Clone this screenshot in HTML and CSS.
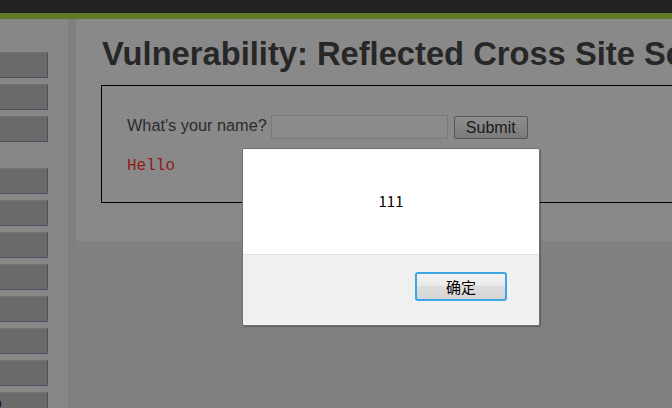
FILE: index.html
```html
<!DOCTYPE html>
<html>
<head>
<meta charset="utf-8">
<link rel="stylesheet" href="styles.css">
</head>
<body>
<div class="page">
  <div class="topbar"></div>
  <div class="greenbar"></div>
  <div class="main">
    <div class="sidebar">
      <div class="menu">
        <div class="item"></div>
        <div class="item"></div>
        <div class="item"></div>
      </div>
      <div class="menu">
        <div class="item"></div>
        <div class="item"></div>
        <div class="item"></div>
        <div class="item"></div>
        <div class="item"></div>
        <div class="item"></div>
        <div class="item"></div>
        <div class="item"><span class="clip">D</span></div>
      </div>
    </div>
    <div class="content">
      <div class="panel">
        <h1 class="title">Vulnerability: Reflected Cross Site Scripting (XSS)</h1>
        <div class="box">
          <div class="form-row">
            <span class="label">What's your name?</span>
            <span class="input"></span>
            <span class="submit">Submit</span>
          </div>
          <pre class="hello">Hello</pre>
        </div>
      </div>
    </div>
  </div>
</div>
<div class="dialog">
  <div class="dialog-body">111</div>
  <div class="dialog-foot">
    <span class="ok">确定</span>
  </div>
</div>
</body>
</html>
```
FILE: styles.css
```css
html, body {
  margin: 0;
  padding: 0;
}
body {
  width: 672px;
  height: 408px;
  overflow: hidden;
  position: relative;
  background: #808080;
  font-family: "Liberation Sans", Arial, sans-serif;
}
.page {
  display: flex;
  flex-direction: column;
  height: 408px;
  overflow: hidden;
}
.topbar {
  flex-shrink: 0;
  height: 13px;
  background: #222222;
}
.greenbar {
  flex-shrink: 0;
  height: 6px;
  background: #627a28;
}
.main {
  flex: 1;
  min-height: 0;
  display: flex;
  overflow: hidden;
}
.sidebar {
  flex-shrink: 0;
  width: 68px;
  background: #878787;
  border-right: 8px solid #7f7f7f;
  padding-top: 33px;
  box-sizing: content-box;
  display: flex;
  flex-direction: column;
  gap: 26px;
}
.menu {
  flex-shrink: 0;
  display: flex;
  flex-direction: column;
  gap: 6px;
}
.item {
  flex-shrink: 0;
  width: 48px;
  height: 26px;
  box-sizing: border-box;
  background: #6a6a6a;
  border-top: 1px solid #727272;
  border-right: 1px solid #4d5262;
  border-bottom: 1px solid #4d5262;
  overflow: hidden;
  position: relative;
}
.clip {
  display: block;
  margin-left: -9px;
  margin-top: 2px;
  font-size: 15px;
  line-height: 18px;
  color: #111;
}
.content {
  flex: 1;
  min-width: 0;
  background: #808080;
}
.panel {
  background: #898989;
  height: 222px;
  padding-left: 26px;
  overflow: hidden;
  box-sizing: border-box;
  padding-top: 16px;
}
.title {
  margin: 0;
  font-size: 32.7px;
  line-height: 38px;
  font-weight: bold;
  color: #272727;
  white-space: nowrap;
}
.box {
  margin-top: 12px;
  margin-left: -1px;
  border: 1px solid #000;
  border-right: none;
  height: 118px;
  box-sizing: border-box;
  padding-left: 25px;
  padding-top: 29px;
  width: 700px;
}
.form-row {
  display: flex;
  align-items: flex-start;
  height: 24px;
}
.label {
  font-size: 16.3px;
  line-height: 19px;
  margin-top: 1px;
  color: #2b2b2b;
}
.input {
  display: inline-block;
  margin-left: 4px;
  width: 177px;
  height: 24px;
  box-sizing: border-box;
  border: 1px solid #7a7a7a;
  background: #8b8b8b;
}
.submit {
  margin-left: 6px;
  margin-top: 1px;
  height: 23px;
  width: 74px;
  box-sizing: border-box;
  border: 1px solid #555;
  border-radius: 2px;
  background: linear-gradient(#8e8e8e, #7a7a7a);
  font-size: 16px;
  color: #1a1a1a;
  display: flex;
  align-items: center;
  justify-content: center;
}
.hello {
  margin: 18px 0 0 0;
  font-family: "Liberation Mono", "Courier New", monospace;
  font-size: 16px;
  line-height: 18px;
  color: #8f1a1a;
}
.dialog {
  position: absolute;
  left: 242px;
  top: 148px;
  width: 298px;
  height: 178px;
  box-sizing: border-box;
  border: 1px solid #707070;
  border-radius: 2px;
  box-shadow: 1px 1px 1px rgba(0,0,0,0.25);
  display: flex;
  flex-direction: column;
  overflow: hidden;
  font-family: "Noto Sans CJK SC", "DejaVu Sans", sans-serif;
}
.dialog-body {
  height: 106px;
  background: #ffffff;
  border-bottom: 1px solid #e4e4e4;
  display: flex;
  align-items: center;
  justify-content: center;
  font-size: 15px;
  color: #000;
  padding-bottom: 2px;
  box-sizing: border-box;
}
.dialog-foot {
  flex: 1;
  background: #f0f0f0;
  display: flex;
  justify-content: flex-end;
  align-items: flex-start;
  padding-top: 17px;
  padding-right: 32px;
}
.ok {
  width: 92px;
  height: 29px;
  box-sizing: border-box;
  border: 2px solid #3ca7e4;
  border-radius: 3px;
  background: linear-gradient(#f2f2f2 0%, #ebebeb 45%, #dddddd 50%, #d5d5d5 100%);
  display: flex;
  align-items: center;
  justify-content: center;
  font-size: 15px;
  color: #000;
}
```
